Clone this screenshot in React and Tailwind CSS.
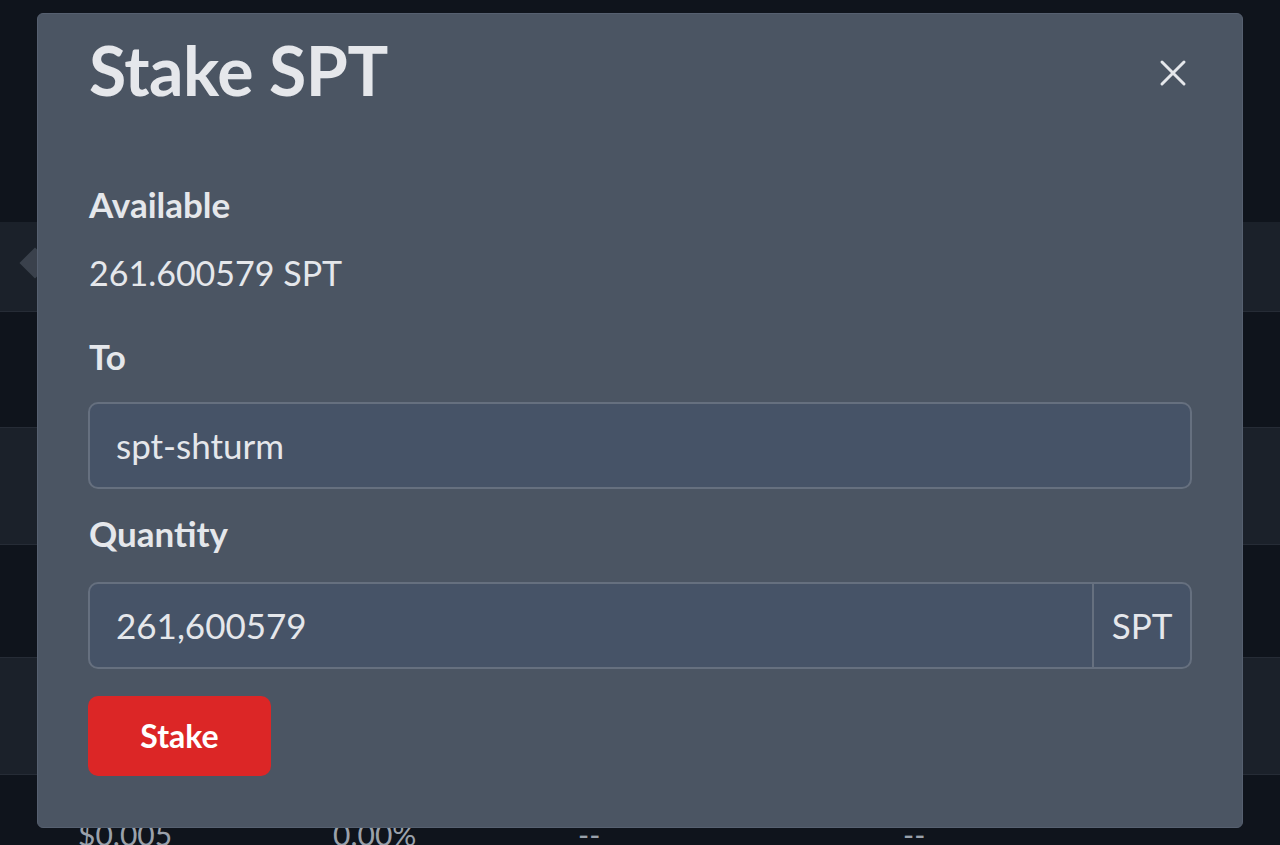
import React from 'react';

const rows = [
  { h: 'h-[90px]', bg: 'bg-[#1b212a]' },
  { h: 'h-[116px]', bg: 'bg-[#0f141c]' },
  { h: 'h-[117px]', bg: 'bg-[#1b212a]' },
  { h: 'h-[113px]', bg: 'bg-[#0f141c]' },
  { h: 'h-[117px]', bg: 'bg-[#1b212a]' },
];

const App = () => {
  return (
    <div className="relative w-[1280px] h-[845px] overflow-hidden bg-[#0f141c] font-['Lato',sans-serif]">
      {/* page behind the modal */}
      <div className="flex flex-col">
        <div className="h-[222px]" />
        {rows.map((r, i) => (
          <div key={i} className={`${r.h} ${r.bg} border-b border-[#262c36]`} />
        ))}
        <div className="flex items-start pt-[44px] text-[30px] text-[#9aa1ab] leading-none">
          <span className="ml-[78px] w-[255px]">$0.005</span>
          <span className="w-[245px]">0.00%</span>
          <span className="w-[325px]">--</span>
          <span>--</span>
        </div>
      </div>
      <div className="absolute left-[24px] top-[252px] w-[22px] h-[22px] rotate-45 bg-[#3a414c]" />

      {/* modal */}
      <div className="absolute left-[37px] top-[13px] w-[1206px] h-[815px] rounded-[6px] bg-[#4b5563] border border-[#566070] px-[50px] text-[#e5e7eb]">
        <div className="flex items-center justify-between pt-[22px]">
          <h1 className="ml-[1px] text-[68px] font-bold leading-[68px] tracking-[-0.5px]">Stake SPT</h1>
          <button className="mr-[5px] mt-[5px] text-[#e5e7eb]">
            <svg width="28" height="28" viewBox="0 0 28 28" fill="none" stroke="currentColor" strokeWidth="3" strokeLinecap="round">
              <path d="M3 3L25 25M25 3L3 25" />
            </svg>
          </button>
        </div>

        <div className="ml-[1px] mt-[83px] text-[35px] font-bold leading-none">Available</div>
        <div className="ml-[1px] mt-[34px] text-[34px] leading-none">261.600579 SPT</div>

        <div className="ml-[1px] mt-[49px] text-[35px] font-bold leading-none">To</div>
        <div className="mt-[28px] h-[87px] rounded-[10px] border-2 border-[#66707f] bg-[#465367] flex items-center px-[26px] text-[35px]">
          spt-shturm
        </div>

        <div className="ml-[1px] mt-[27px] text-[35px] font-bold leading-none">Quantity</div>
        <div className="mt-[31px] h-[87px] rounded-[10px] border-2 border-[#66707f] bg-[#465367] flex text-[35px]">
          <div className="flex-1 flex items-center px-[26px]">261,600579</div>
          <div className="w-[98px] border-l-2 border-[#66707f] flex items-center justify-center">SPT</div>
        </div>

        <button className="mt-[27px] w-[183px] h-[80px] rounded-[10px] bg-[#dc2626] text-white text-[32px] font-bold">
          Stake
        </button>
      </div>
    </div>
  );
};

export default App;
